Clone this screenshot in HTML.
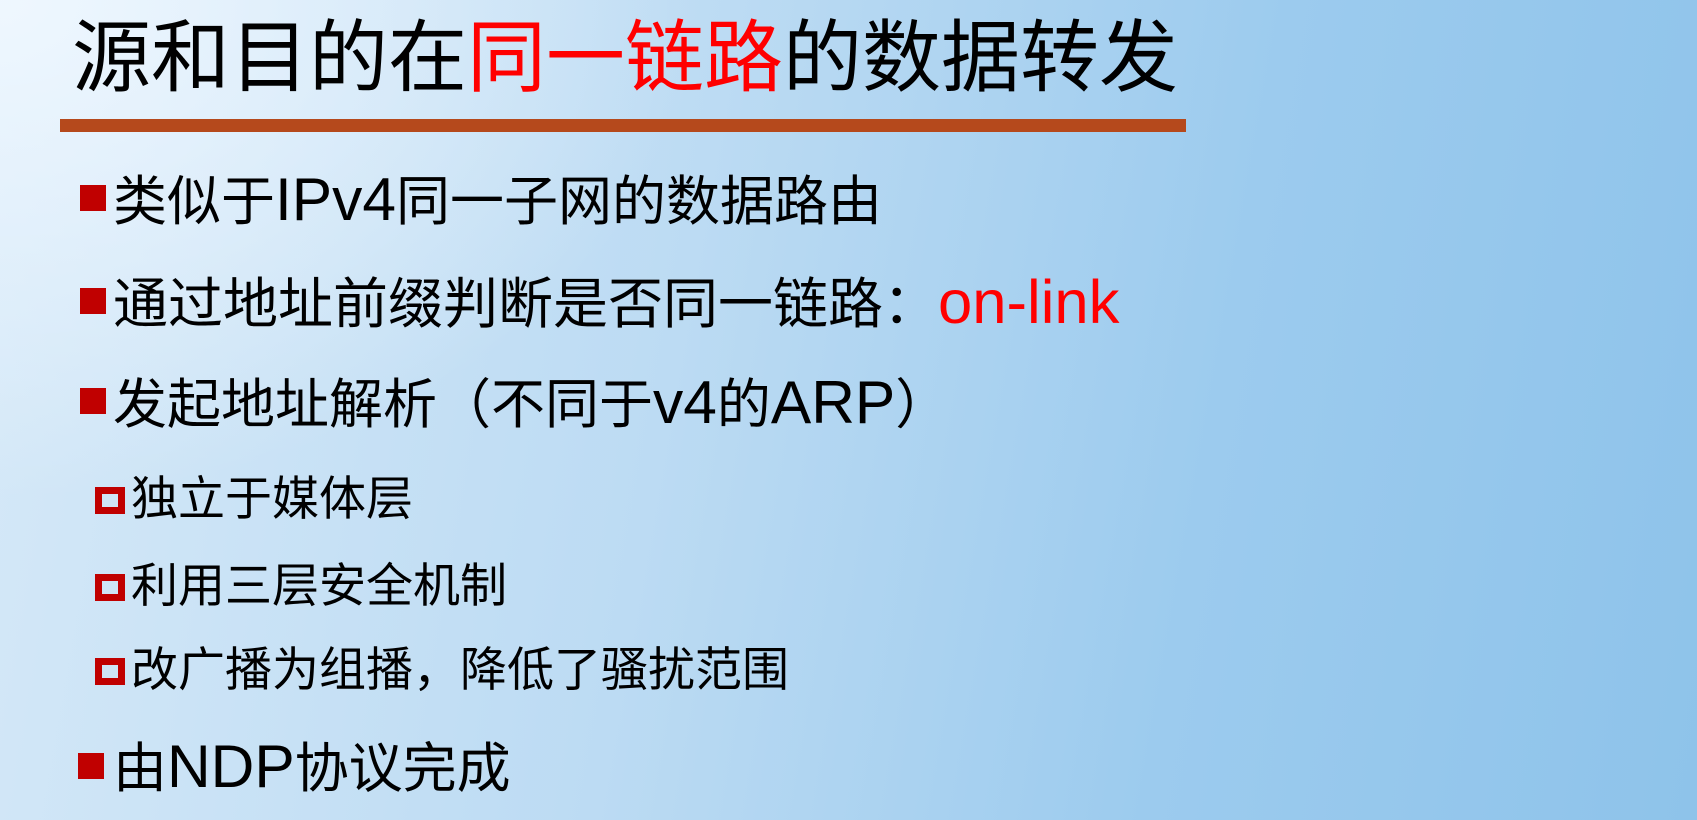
<!DOCTYPE html>
<html><head><meta charset="utf-8"><style>
html,body{margin:0;padding:0}
body{width:1697px;height:820px;overflow:hidden;position:relative;
background:
radial-gradient(ellipse 700px 500px at 0px 0px, rgba(240,248,255,0.95), rgba(240,248,255,0) 100%),
linear-gradient(100deg,#d6e9f8 0%,#bcdbf3 40%,#9ccbee 70%,#8ec3ea 100%);
font-family:"Liberation Sans","Noto Sans CJK SC",sans-serif;color:#000}
.t{position:absolute;white-space:nowrap;line-height:1}
.r{color:#ff0000}
.l{font-size:1.12em;line-height:1}
.bar{position:absolute;left:60px;top:119px;width:1126px;height:13px;background:#b5491c}
.sq{position:absolute;background:#c00000}
.hs{position:absolute;border:7px solid #c00000;box-sizing:border-box;width:30px;height:27px}
</style></head><body>
<div class="t" style="left:72px;top:18px;font-size:79px">源和目的在<span class="r">同一链路</span>的数据转发</div>
<div class="bar"></div>

<div class="sq" style="left:80px;top:185px;width:26px;height:26px"></div>
<div class="t" style="left:113px;top:169px;font-size:54px">类似于<span class="l">IPv4</span>同一子网的数据路由</div>

<div class="sq" style="left:80px;top:288px;width:26px;height:26px"></div>
<div class="t" style="left:113px;top:272px;font-size:55px">通过地址前缀判断是否同一链路：<span class="r l">on-link</span></div>

<div class="sq" style="left:80px;top:388px;width:26px;height:26px"></div>
<div class="t" style="left:113px;top:372px;font-size:54px">发起地址解析（不同于<span class="l">v4</span>的<span class="l">ARP</span>）</div>

<div class="hs" style="left:95px;top:487px"></div>
<div class="t" style="left:131px;top:475px;font-size:47px">独立于媒体层</div>

<div class="hs" style="left:95px;top:574px"></div>
<div class="t" style="left:131px;top:562px;font-size:47px">利用三层安全机制</div>

<div class="hs" style="left:95px;top:658px"></div>
<div class="t" style="left:131px;top:646px;font-size:47px">改广播为组播，降低了骚扰范围</div>

<div class="sq" style="left:78px;top:753px;width:26px;height:26px"></div>
<div class="t" style="left:113px;top:736px;font-size:54px">由<span class="l">NDP</span>协议完成</div>
</body></html>
